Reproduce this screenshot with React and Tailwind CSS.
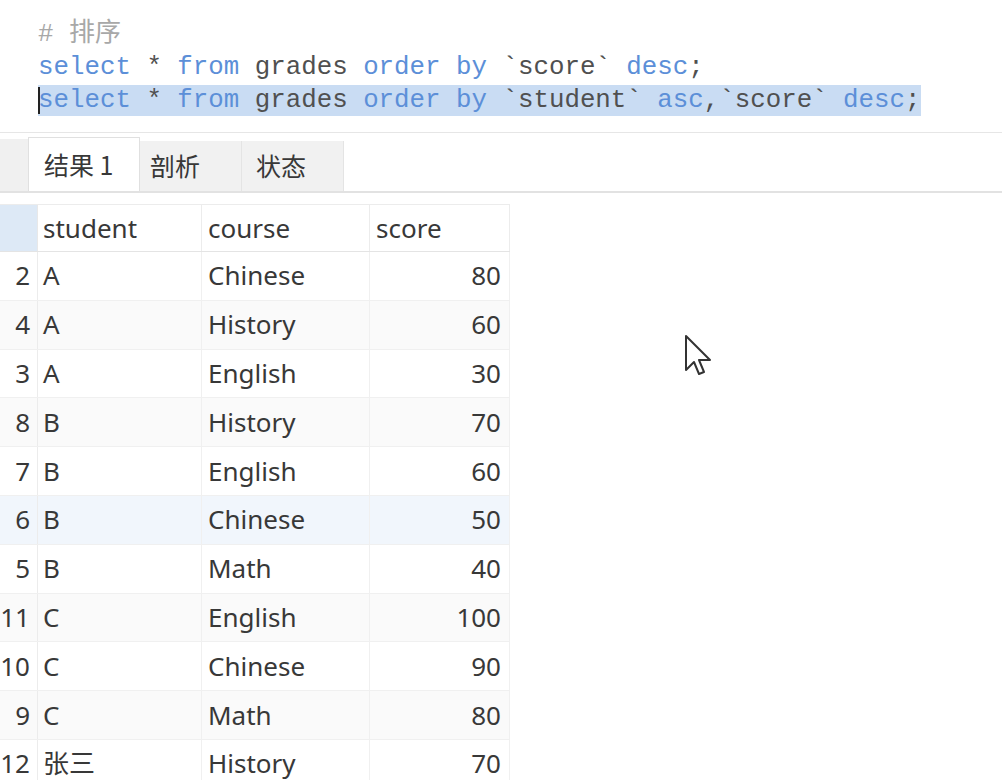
import React from "react";

const rows = [
  ["2", "A", "Chinese", "80"],
  ["4", "A", "History", "60"],
  ["3", "A", "English", "30"],
  ["8", "B", "History", "70"],
  ["7", "B", "English", "60"],
  ["6", "B", "Chinese", "50"],
  ["5", "B", "Math", "40"],
  ["11", "C", "English", "100"],
  ["10", "C", "Chinese", "90"],
  ["9", "C", "Math", "80"],
  ["12", "张三", "History", "70"],
];

const K = ({ children }) => <span className="text-[#5c8fd8]">{children}</span>;
const I = ({ children }) => <span className="text-[#505050]">{children}</span>;

export default function App() {
  return (
    <div className="relative w-[1002px] h-[780px] overflow-hidden bg-white">
      {/* editor */}
      <div
        className="pt-[13px] pl-[38px] h-[132px] text-[25.8px] leading-[33px] whitespace-pre"
        style={{ fontFamily: '"Liberation Mono", "Noto Sans CJK SC", monospace' }}
      >
        <div className="text-[#a8a8a8]">
          # <span style={{ fontFamily: '"Noto Sans CJK SC", sans-serif' }} className="text-[26px]">排序</span>
        </div>
        <div>
          <K>select</K> <I>*</I> <K>from</K> <I>grades</I> <K>order</K> <K>by</K> <I>`score`</I> <K>desc</K><I>;</I>
        </div>
        <div className="relative inline-block bg-[#c9dcf3] h-[31px] leading-[31px] mt-[1px]">
          <span className="absolute left-0 top-[2px] w-[2px] h-[27px] bg-[#222]" />
          <K>select</K> <I>*</I> <K>from</K> <I>grades</I> <K>order</K> <K>by</K> <I>`student`</I> <K>asc</K><I>,`score`</I> <K>desc</K><I>;</I>
        </div>
      </div>

      {/* tabs */}
      <div
        className="border-t border-[#e6e6e6] h-[61px] flex items-end border-b-2 border-b-[#e2e2e2]"
        style={{ fontFamily: '"Noto Sans CJK SC", "Noto Sans", sans-serif' }}
      >
        <div className="w-[28px] h-[52px] bg-[#f0f0f0]" />
        <div className="w-[112px] h-[54px] bg-white border-t border-x border-[#e0e0e0] pl-[15px] flex items-center text-[25px] text-[#383838]">
          结果 1
        </div>
        <div className="w-[102px] h-[50px] bg-[#f1f1f1] border-r border-[#e4e4e4] pl-[10px] flex items-center text-[25px] text-[#383838]">
          剖析
        </div>
        <div className="w-[102px] h-[50px] bg-[#f1f1f1] border-r border-[#e4e4e4] pl-[14px] flex items-center text-[25px] text-[#383838]">
          状态
        </div>
        <div className="flex-1" />
      </div>

      {/* table */}
      <div
        className="mt-[11px] w-[510px] text-[26px] text-[#383838]"
        style={{ fontFamily: '"Noto Sans", "Noto Sans CJK SC", sans-serif' }}
      >
        <div className="flex h-[48px] border-t border-[#ececec] border-b border-b-[#e4e4e4]">
          <div className="w-[38px] bg-[#dde9f6] border-r border-[#e8e8e8]" />
          <div className="w-[164px] pl-[5px] flex items-center border-r border-[#ececec]">student</div>
          <div className="w-[168px] pl-[6px] flex items-center border-r border-[#ececec]">course</div>
          <div className="w-[140px] pl-[6px] flex items-center border-r border-[#ececec]">score</div>
        </div>
        {rows.map((r, i) => (
          <div
            key={i}
            className={
              "flex h-[48.8px] border-b border-[#f0f0f0] " +
              (i === 5 ? "bg-[#f1f6fc]" : i % 2 === 1 ? "bg-[#fafafa]" : "bg-white")
            }
          >
            <div className="w-[38px] pr-[7px] flex items-center justify-end border-r border-[#ececec]">{r[0]}</div>
            <div className="w-[164px] pl-[5px] flex items-center border-r border-[#f0f0f0]">{r[1]}</div>
            <div className="w-[168px] pl-[6px] flex items-center border-r border-[#f0f0f0]">{r[2]}</div>
            <div className="w-[140px] pr-[8px] flex items-center justify-end border-r border-[#f0f0f0]">{r[3]}</div>
          </div>
        ))}
      </div>

      {/* mouse cursor */}
      <svg
        className="absolute left-[684px] top-[334px]"
        width="30"
        height="46"
        viewBox="0 0 30 46"
      >
        <path
          d="M2 2 L2 36 L10 28 L15 40 L20 38 L15 26 L26 26 Z"
          fill="white"
          stroke="#333"
          strokeWidth="2"
          strokeLinejoin="round"
        />
      </svg>
    </div>
  );
}
